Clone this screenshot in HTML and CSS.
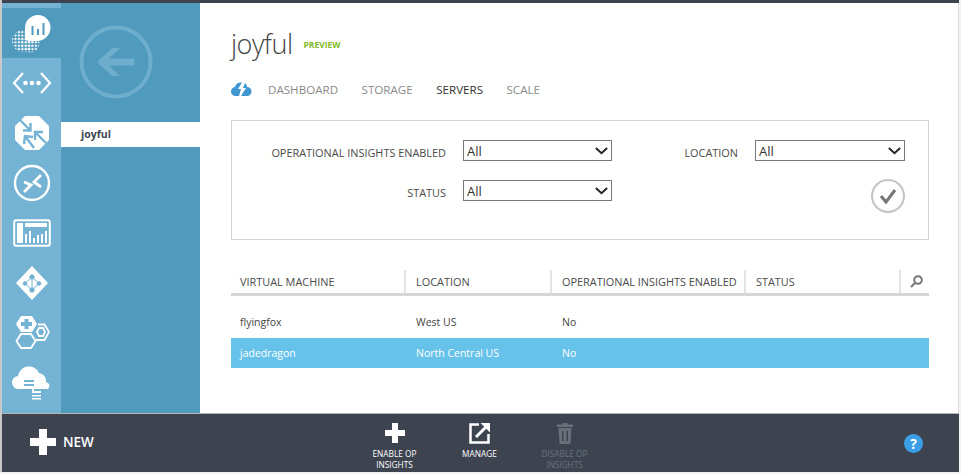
FILE: index.html
```html
<!DOCTYPE html>
<html lang="en">
<head>
    <meta charset="UTF-8">
    <meta name="viewport" content="width=device-width, initial-scale=1.0">
    <title>joyful - servers</title>
    <link rel="stylesheet" href="styles.css">
</head>
<body>
    <div class="window">
        <div class="topbar"></div>
        <div class="content">
            <nav class="nav">
                <div class="nav-item active">
                    <svg width="50" height="46" viewBox="0 0 50 46">
                        <defs>
                            <pattern id="dots" width="3.4" height="3.4" patternUnits="userSpaceOnUse">
                                <circle cx="1.7" cy="1.7" r="1.15" fill="#fff"/>
                            </pattern>
                        </defs>
                        <circle cx="16" cy="31" r="11" fill="url(#dots)"/>
                        <circle cx="23" cy="33" r="9.5" fill="url(#dots)"/>
                        <path d="M26 31h-4a4 4 0 0 1-4-4V18a13 13 0 0 1 13-13 12.500 12.500 0 0 1 12.500 12.500A13.500 13.500 0 0 1 30 31z" fill="#fff"/>
                        <path d="M24.500 16h2v9h-2zM30 19h2v6h-2zM35.500 13h2v12h-2z" fill="#4f9abd"/>
                    </svg>
                </div>
                <div class="nav-item">
                    <svg width="40" height="24" viewBox="0 0 40 24" fill="none" stroke="#fff" stroke-width="2.200">
                        <path d="M11 2 2 12l9 10M29 2l9 10-9 10"/>
                        <circle cx="13.500" cy="12" r="2.300" fill="#fff" stroke="none"/>
                        <circle cx="20" cy="12" r="2.300" fill="#fff" stroke="none"/>
                        <circle cx="26.500" cy="12" r="2.300" fill="#fff" stroke="none"/>
                    </svg>
                </div>
                <div class="nav-item">
                    <svg width="36" height="36" viewBox="0 0 36 36">
                        <path d="M11 1h14l10 10v14L25 35H11L1 25V11z" fill="#fff"/>
                        <g fill="none" stroke="#74b3d4" stroke-width="2.400">
                            <path d="M6 5l10 10M9 15.500h7.500V8"/>
                            <path d="M32 28 21 17M21 25v-8h8"/>
                            <path d="M20 33 11 21M10 29l1-8 8 1"/>
                        </g>
                    </svg>
                </div>
                <div class="nav-item">
                    <svg width="38" height="38" viewBox="0 0 38 38" fill="none" stroke="#fff" stroke-width="2.400">
                        <circle cx="19" cy="19" r="17"/>
                        <path d="M11 18l7 3-7 7M28 11l-7 7 7 5" stroke-width="2.800"/>
                    </svg>
                </div>
                <div class="nav-item">
                    <svg width="38" height="28" viewBox="0 0 38 28">
                        <rect x="1.200" y="1.200" width="35.600" height="25.600" rx="2" fill="none" stroke="#fff" stroke-width="2"/>
                        <path d="M4 4h6v20H4zM12 4h22v4H12zM12 15h2v9h-2zM16 12h2v12h-2zM20 19h2v5h-2zM24 16h2v8h-2zM28 15h2v9h-2zM32 12h2v12h-2z" fill="#fff"/>
                    </svg>
                </div>
                <div class="nav-item">
                    <svg width="34" height="34" viewBox="0 0 34 34">
                        <path d="M17 0 33 17 17 34 1 17z" fill="#fff"/>
                        <g stroke="#74b3d4" stroke-width="1" fill="#74b3d4">
                            <path d="M17 11 10 17.500 17 24l7-6.500zM17 11v13" fill="none"/>
                            <circle cx="17" cy="11" r="2.200"/>
                            <circle cx="10" cy="17.500" r="1.800"/>
                            <circle cx="24" cy="17.500" r="1.800"/>
                            <circle cx="17" cy="24" r="2.200"/>
                        </g>
                    </svg>
                </div>
                <div class="nav-item">
                    <svg width="36" height="34" viewBox="0 0 36 34">
                        <path d="M7 0h11l5 8-5 8H7L2 8z" fill="#fff"/>
                        <path d="M10.500 3h4v3h3.500v4h-3.500v3h-4v-3H7V6h3.500z" fill="#74b3d4"/>
                        <path d="M24 8.500h6.500L35 16l-4.500 8H22" fill="none" stroke="#fff" stroke-width="1.800"/>
                        <path d="M25 12h4l2 4-2 4h-4l-2-4z" fill="none" stroke="#fff" stroke-width="1.800"/>
                        <path d="M7 18h10l4.500 7-4.500 7H7l-4.500-7z" fill="none" stroke="#fff" stroke-width="1.800"/>
                    </svg>
                </div>
                <div class="nav-item">
                    <svg width="40" height="36" viewBox="0 0 40 36">
                        <path d="M7 24a6.500 6.500 0 0 1-1-13 11 11 0 0 1 21-3 8 8 0 0 1 7 9 4 4 0 0 1 2 7z" fill="#fff"/>
                        <path d="M12 15h10v2H12zM12 19h10v2H12z" fill="#74b3d4"/>
                        <path d="M20 24h2v2h7v2h-9zM20 30h9v1.500h-9zM20 33h9v1.500h-9z" fill="#fff"/>
                    </svg>
                </div>
            </nav>
            <aside class="side">
                <div class="back">
                    <svg width="74" height="74" viewBox="0 0 74 74" fill="none" stroke="#6fadcd">
                        <circle cx="37" cy="37" r="34.500" stroke-width="4"/>
                        <path d="M18 37 33 23h8L30 33.500h25.500v7H30L41 51h-8z" fill="#6fadcd" stroke="none"/>
                    </svg>
                </div>
                <div class="side-link">joyful</div>
            </aside>
            <main class="main">
                <div class="title-row">
                    <h1 class="title">joyful</h1>
                    <span class="preview">PREVIEW</span>
                </div>
                <div class="tabs">
                    <svg class="tab-icon" width="21" height="14" viewBox="0 0 21 14">
                        <path d="M5 14a4.500 4.500 0 0 1-1-9 6 6 0 0 1 7-4.500L7 7h3L8 14zM10 14l5-8h-3l2-5a5 5 0 0 1 2 4 4.500 4.500 0 0 1 0 9z" fill="#3f96d0"/>
                    </svg>
                    <a class="tab">DASHBOARD</a>
                    <a class="tab">STORAGE</a>
                    <a class="tab current">SERVERS</a>
                    <a class="tab">SCALE</a>
                </div>
                <section class="filters">
                    <label class="filter-label">OPERATIONAL INSIGHTS ENABLED</label>
                    <div class="select"><span>All</span><svg width="13" height="8" viewBox="0 0 15 9" fill="none" stroke="#222" stroke-width="2.200"><path d="M1 1l6.500 6L14 1"/></svg></div>
                    <label class="filter-label">LOCATION</label>
                    <div class="select wide"><span>All</span><svg width="13" height="8" viewBox="0 0 15 9" fill="none" stroke="#222" stroke-width="2.200"><path d="M1 1l6.500 6L14 1"/></svg></div>
                    <label class="filter-label">STATUS</label>
                    <div class="select"><span>All</span><svg width="13" height="8" viewBox="0 0 15 9" fill="none" stroke="#222" stroke-width="2.200"><path d="M1 1l6.500 6L14 1"/></svg></div>
                    <div class="apply">
                        <svg width="34" height="34" viewBox="0 0 34 34" fill="none">
                            <circle cx="17" cy="17" r="16" stroke="#c4c4c4" stroke-width="2"/>
                            <path d="M10 17l5 6 9-12" stroke="#777" stroke-width="3"/>
                        </svg>
                    </div>
                </section>
                <div class="vm-table">
                    <div class="vm-row vm-head">
                        <div>VIRTUAL MACHINE</div>
                        <div>LOCATION</div>
                        <div>OPERATIONAL INSIGHTS ENABLED</div>
                        <div>STATUS</div>
                        <div class="search">
                            <svg width="13" height="13" viewBox="0 0 13 13" fill="none" stroke="#777" stroke-width="2">
                                <circle cx="8" cy="5" r="3.800"/>
                                <path d="M5 8 1 12"/>
                            </svg>
                        </div>
                    </div>
                    <div class="vm-row plain">
                        <div>flyingfox</div>
                        <div>West US</div>
                        <div>No</div>
                        <div></div>
                        <div></div>
                    </div>
                    <div class="vm-row selected">
                        <div>jadedragon</div>
                        <div>North Central US</div>
                        <div>No</div>
                        <div></div>
                        <div></div>
                    </div>
                </div>
            </main>
        </div>
        <footer class="cmdbar">
            <div class="new">
                <svg width="26" height="26" viewBox="0 0 26 26"><path d="M9 0h8v9h9v8h-9v9H9v-9H0V9h9z" fill="#fff"/></svg>
                <span>NEW</span>
            </div>
            <div class="commands">
                <div class="command">
                    <svg width="22" height="22" viewBox="0 0 22 22"><path d="M8 1h6v7h7v6h-7v7H8v-7H1V8h7z" fill="#fff"/></svg>
                    <span>ENABLE OP INSIGHTS</span>
                </div>
                <div class="command">
                    <svg width="22" height="22" viewBox="0 0 22 22" fill="none" stroke="#fff" stroke-width="2.500">
                        <path d="M10 2.500H1.500v18h18V12"/>
                        <path d="M7 15 17 5" stroke-width="3"/>
                        <path d="M11.500 1H21v9.500z" fill="#fff" stroke="none"/>
                    </svg>
                    <span>MANAGE</span>
                </div>
                <div class="command disabled">
                    <svg width="16" height="22" viewBox="0 0 16 22">
                        <path d="M5.500 1h5v1.500H16V5H0V2.500h5.500zM1.500 6h13l-1 15a1 1 0 0 1-1 1h-9a1 1 0 0 1-1-1zM5 9v10h1.500V9zM9.500 9v10H11V9z" fill="#6a7079" fill-rule="evenodd"/>
                    </svg>
                    <span>DISABLE OP INSIGHTS</span>
                </div>
            </div>
            <div class="help">?</div>
        </footer>
    </div>
</body>
</html>
```

FILE: styles.css
```css
html, body { margin: 0; height: 474px; overflow: hidden; background: #f4f4f4; }
body { font-family: "Open Sans", "Noto Sans", sans-serif; color: #444; }

.window { width: 957px; height: 472px; border-left: 2px solid #c8c8c8; display: flex; flex-direction: column; }
.topbar { height: 3px; background: #3d4450; flex: none; }
.content { display: flex; height: 410px; flex: none; }

.nav { width: 59px; flex: none; background: #74b3d4; padding-top: 5px; box-sizing: border-box; }
.nav-item { height: 50px; display: flex; align-items: center; justify-content: center; }
.nav-item.active { background: #4f9abd; }

.side { width: 139px; flex: none; background: #4f9abd; }
.back { height: 118px; padding: 22px 0 0 18px; box-sizing: border-box; }
.side-link { margin-top: 1px; height: 25px; line-height: 25px; padding-left: 20px; background: #fff; font-size: 10.5px; font-weight: 700; color: #3d4450; }

.main { flex: 1; background: #fff; padding: 0 29px 0 31px; border-right: 1px solid #ddd; }
.title-row { display: flex; align-items: center; gap: 11px; height: 58px; padding-top: 23px; box-sizing: border-box; }
.title { margin: 0; font-size: 27px; font-weight: 300; line-height: 35px; color: #444; letter-spacing: -0.5px; }
.preview { font-size: 8.5px; font-weight: 700; color: #7fba28; padding-top: 2px; }

.tabs { display: flex; align-items: center; height: 24px; margin-top: 16px; }
.tab-icon { margin-right: 16px; }
.tab { font-size: 11.6px; color: #8a8a8a; margin-right: 23.5px; }
.tab.current { color: #333; }

.filters {
    height: 120px; margin-top: 19px; box-sizing: border-box; border: 1px solid #d4d4d4; padding-top: 19px;
    display: grid; grid-template-columns: 214px 149px 109px 150px; grid-auto-rows: min-content; column-gap: 17px; row-gap: 19px;
}
.filter-label { font-size: 10.9px; font-weight: 500; text-align: right; height: 19px; margin-top: 2px; line-height: 21px; color: #4a4a4a; white-space: nowrap; }
.select {
    height: 21px; box-sizing: border-box; border: 1px solid #777; padding: 0 3px 0 3px;
    display: flex; align-items: center; justify-content: space-between; font-size: 13px; color: #333;
}
.apply { justify-self: end; margin-top: -1px; height: 34px; grid-column: 4; }

.vm-table { margin-top: 30px; font-size: 10.5px; }
.vm-row { display: grid; grid-template-columns: 175px 146px 194px 155px 28px; height: 31px; align-items: center; }
.vm-row > div { padding-left: 10px; }
.vm-row > div:first-child { padding-left: 9px; }
.vm-head { height: 23px; border-bottom: 3px solid #d6d6d6; font-size: 10.9px; font-weight: 500; color: #4a4a4a; box-sizing: content-box; margin-bottom: 11px; align-items: stretch; }
.vm-head > div { line-height: 23px; border-right: 2px solid #e4e4e4; box-sizing: border-box; white-space: nowrap; }
.vm-head > div:last-child { border-right: 0; }
.vm-head .search { padding-left: 9px; display: flex; align-items: center; }
.vm-row.plain { padding-bottom: 2px; height: 29px; }
.vm-row.selected { height: 30px; background: #67c2ea; color: #fff; }

.cmdbar { flex: 1; background: #3d4450; border-top: 1px solid #b5b5b5; display: flex; color: #fff; box-sizing: border-box; }
.new { width: 350px; flex: none; display: flex; align-items: center; gap: 7px; padding-left: 28px; box-sizing: border-box; font-size: 13.5px; font-weight: 600; padding-bottom: 2px; }
.commands { display: flex; }
.command { width: 85px; display: flex; flex-direction: column; align-items: center; padding-top: 8px; box-sizing: border-box; font-size: 8.3px; line-height: 11px; text-align: center; font-weight: 500; }
.command span { margin-top: 4px; width: 60px; }
.command.disabled { color: #6a7079; }
.help { margin: 20px 36px 0 auto; width: 19px; height: 19px; border-radius: 50%; background: #3b9fe8; font-size: 14px; font-weight: 700; line-height: 19px; text-align: center; color: #fff; }
```
